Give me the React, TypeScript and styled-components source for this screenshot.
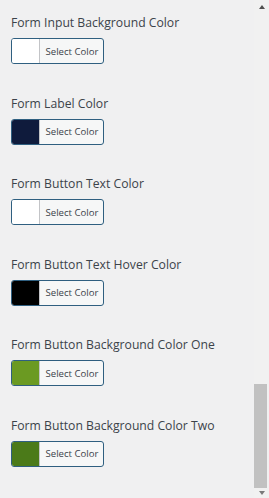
import styled, { createGlobalStyle } from "styled-components";

const GlobalStyle = createGlobalStyle`
  html, body {
    margin: 0;
    padding: 0;
    background: #f0f0f1;
    overflow: hidden;
  }
`;

interface ColorSetting {
    label: string;
    color: string;
}

const settings: ColorSetting[] = [
    {label: "Form Input Background Color", color: "#ffffff"},
    {label: "Form Label Color", color: "#0f1b3c"},
    {label: "Form Button Text Color", color: "#ffffff"},
    {label: "Form Button Text Hover Color", color: "#000000"},
    {label: "Form Button Background Color One", color: "#6b9a22"},
    {label: "Form Button Background Color Two", color: "#4b7a19"},
];

const Frame = styled.div`
  display: flex;
  width: 269px;
  height: 498px;
  background: #f0f0f1;
  font-family: "Open Sans", "Noto Sans", sans-serif;
`;

const Content = styled.div`
  flex: 1;
  padding: 13px 0 0 11px;
`;

const Field = styled.div`
  display: flex;
  flex-direction: column;
  align-items: flex-start;
  margin-bottom: 29.5px;
`;

const Label = styled.div`
  font-size: 12.2px;
  line-height: 19px;
  color: #3c434a;
  margin-bottom: 6px;
`;

const ColorButton = styled.button`
  display: flex;
  align-items: stretch;
  width: 93px;
  height: 26px;
  padding: 0;
  border: 1px solid #2f5f80;
  border-radius: 3px;
  background: #f6f7f7;
  overflow: hidden;
  cursor: pointer;
`;

const Swatch = styled.span<{ $color: string }>`
  width: 27px;
  background: ${p => p.$color};
  border-right: 1px solid #c3c4c7;
`;

const ButtonText = styled.span`
  flex: 1;
  display: flex;
  align-items: center;
  justify-content: center;
  padding-left: 1px;
  font-family: "Open Sans", "Noto Sans", sans-serif;
  font-size: 9.6px;
  color: #3c434a;
`;

const Scrollbar = styled.div`
  width: 15px;
  display: flex;
  flex-direction: column;
  align-items: center;
  background: #f1f1f1;
`;

const Arrow = styled.div<{ $down?: boolean }>`
  width: 0;
  height: 0;
  margin: ${p => p.$down ? "3px 0 3px" : "5px 0 5px"};
  border-left: 3.5px solid transparent;
  border-right: 3.5px solid transparent;
  ${p => p.$down
    ? "border-top: 4px solid #7a7a7a;"
    : "border-bottom: 4px solid #505050;"}
`;

const Track = styled.div`
  flex: 1;
  width: 100%;
  display: flex;
  flex-direction: column;
  justify-content: flex-end;
`;

const Thumb = styled.div`
  height: 104px;
  margin: 0 2px 0 0;
  background: #c1c1c1;
`;

export default function App() {
    return (
        <Frame>
            <GlobalStyle/>
            <Content>
                {settings.map(s => (
                    <Field key={s.label}>
                        <Label>{s.label}</Label>
                        <ColorButton type="button">
                            <Swatch $color={s.color}/>
                            <ButtonText>Select Color</ButtonText>
                        </ColorButton>
                    </Field>
                ))}
            </Content>
            <Scrollbar>
                <Arrow/>
                <Track>
                    <Thumb/>
                </Track>
                <Arrow $down/>
            </Scrollbar>
        </Frame>
    );
}
